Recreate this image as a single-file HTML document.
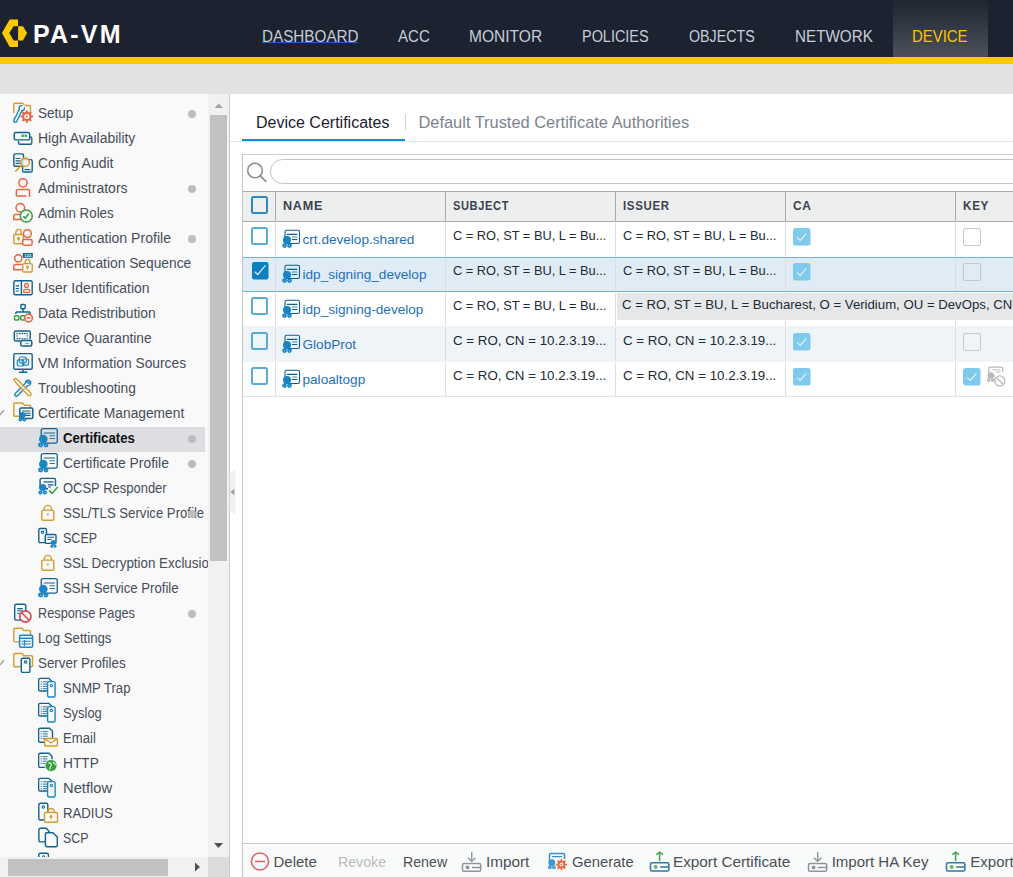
<!DOCTYPE html>
<html><head><meta charset="utf-8">
<style>
*{margin:0;padding:0;box-sizing:border-box}
html,body{width:1013px;height:877px;overflow:hidden;background:#fff;font-family:"Liberation Sans",sans-serif;position:relative}
.abs{position:absolute}
#hdr{position:absolute;left:0;top:0;width:1013px;height:57px;background:#1c2230}
#ylw{position:absolute;left:0;top:57px;width:1013px;height:7px;background:#fdc900}
#band{position:absolute;left:0;top:64px;width:1013px;height:30px;background:#e1e2e4}
.nav{position:absolute;top:27px;font-size:16px;line-height:19px;transform-origin:0 0;color:#c6cdd6;white-space:nowrap}
#devtab{position:absolute;left:893px;top:0;width:95px;height:57px;background:linear-gradient(#1f2531,#4b5059)}
#side{position:absolute;left:0;top:94px;width:229px;height:783px;background:#f9f9f9;overflow:hidden}
.st{position:absolute;font-size:14px;line-height:22px;color:#464d59;white-space:nowrap;transform-origin:0 0}
.st.sel{font-weight:bold;color:#111}
.ic{position:absolute}
.selrow{position:absolute;left:0;width:205px;height:25px;background:#dddee1}
.dot{position:absolute;left:188px;width:8px;height:8px;border-radius:50%;background:#bdbdbd}
#vsb{position:absolute;left:208px;top:94px;width:21px;height:763px;background:#f1f1f1}
#hsb{position:absolute;left:0;top:857px;width:208px;height:20px;background:#f1f1f1}
#corner{position:absolute;left:208px;top:857px;width:21px;height:20px;background:#dcdcdc}
#sideborder{position:absolute;left:229px;top:94px;width:1px;height:783px;background:#c6ccd1}
#main{position:absolute;left:230px;top:94px;width:783px;height:783px;background:#fff}

.tab1{position:absolute;left:256px;top:113.5px;font-size:16px;line-height:18px;color:#1c2230;white-space:nowrap}
.tab2{position:absolute;left:418.5px;top:112.5px;font-size:16.4px;line-height:18px;color:#7b8390;white-space:nowrap}
.hl{position:absolute;background:#c9c9c9}
.th{position:absolute;top:199px;font-size:12px;line-height:14px;font-weight:bold;color:#3a4350;letter-spacing:0.7px;white-space:nowrap;transform-origin:0 0}
.row{position:absolute;left:243px;width:770px;height:35px}
.cb{position:absolute;left:251px;width:17px;height:18px;border:2px solid #5aaad8;border-radius:2.5px;background:transparent}
.lnk{position:absolute;left:302.5px;font-size:13.6px;line-height:16px;color:#1f6fba;white-space:nowrap}
.cell{position:absolute;font-size:13px;line-height:16px;color:#222a33;white-space:nowrap;transform-origin:0 0}
.cbca{position:absolute;left:793px;width:17px;height:17px;border-radius:2px;background:#7ccbef}
.cbkey{position:absolute;left:963px;width:18px;height:18px;border:1.5px solid #c8c8c8;border-radius:2px;background:transparent}
.tb{position:absolute;top:852px;font-size:15px;line-height:19px;color:#4a4f57;white-space:nowrap;transform-origin:0 0}
</style></head><body>
<div id="hdr"></div>
<div id="devtab"></div>
<svg class="abs" style="left:0;top:0" width="30" height="57" viewBox="0 0 30 57"><path d="M9.74 19.4H18v6.8h-4.4L9.3 33.05l4.3 7.45H18v6.4H9.74L1.95 33.05Z" fill="#fdc900"/><path d="M18.1 26.2h4.85l4.1 6.85-4.1 7.45H18.1Z" fill="#fdc900"/></svg>
<div class="abs" style="left:33px;top:21.5px;font-size:25px;line-height:25px;font-weight:bold;color:#fff;letter-spacing:2.2px">PA-VM</div>
<div class="nav" style="left:261.8px;transform:scaleX(0.953);">DASHBOARD</div>
<div class="nav" style="left:397.5px;transform:scaleX(0.942);">ACC</div>
<div class="nav" style="left:469.2px;transform:scaleX(0.972);">MONITOR</div>
<div class="nav" style="left:582.2px;transform:scaleX(0.902);">POLICIES</div>
<div class="nav" style="left:688.7px;transform:scaleX(0.891);">OBJECTS</div>
<div class="nav" style="left:794.5px;transform:scaleX(0.952);">NETWORK</div>
<div class="nav" style="left:912.2px;transform:scaleX(0.933);color:#fcc400;">DEVICE</div>
<div class="abs" style="left:262px;top:42px;width:96px;height:1.3px;background:#1f62bd"></div>
<div id="ylw"></div>
<div id="band"></div>
<div id="side">
<div style="position:absolute;left:0;top:-94px;width:229px;height:877px">
<svg class="ic" style="left:13px;top:102px" width="22" height="22" viewBox="0 0 22 22"><path d="M0.8 11V2.3a1 1 0 0 1 1-1H9.8l1.6 2.2H16.5a1 1 0 0 1 1 1V11" fill="none" stroke="#d39c2c" stroke-width="1.4" stroke-linejoin="round"/><path d="M2.3 18.8L7.6 8.2" stroke="#1a87c4" stroke-width="4.4" stroke-linecap="round"/><circle cx="8.7" cy="6.2" r="3.3" fill="#1a87c4"/><path d="M2.3 18.8L7.6 8.2" stroke="#f9f9f9" stroke-width="1.6" stroke-linecap="round"/><circle cx="8.7" cy="6.2" r="1.9" fill="#f9f9f9"/><path d="M9.2 5.6L11.6 3.4" stroke="#f9f9f9" stroke-width="2.2"/><circle cx="13.8" cy="14.5" r="5.1" fill="#e9653f" stroke="#f9f9f9" stroke-width="0.8"/><rect x="12.9" y="8.2" width="1.8" height="2.4" fill="#e9653f" transform="rotate(0 13.8 14.5)"/><rect x="12.9" y="8.2" width="1.8" height="2.4" fill="#e9653f" transform="rotate(45 13.8 14.5)"/><rect x="12.9" y="8.2" width="1.8" height="2.4" fill="#e9653f" transform="rotate(90 13.8 14.5)"/><rect x="12.9" y="8.2" width="1.8" height="2.4" fill="#e9653f" transform="rotate(135 13.8 14.5)"/><rect x="12.9" y="8.2" width="1.8" height="2.4" fill="#e9653f" transform="rotate(180 13.8 14.5)"/><rect x="12.9" y="8.2" width="1.8" height="2.4" fill="#e9653f" transform="rotate(225 13.8 14.5)"/><rect x="12.9" y="8.2" width="1.8" height="2.4" fill="#e9653f" transform="rotate(270 13.8 14.5)"/><rect x="12.9" y="8.2" width="1.8" height="2.4" fill="#e9653f" transform="rotate(315 13.8 14.5)"/><circle cx="13.8" cy="14.5" r="2.6" fill="#f9f9f9"/><circle cx="13.8" cy="14.5" r="1.1" fill="#e9653f"/></svg>
<div class="st" style="left:38px;top:102px;transform:scaleX(0.965)">Setup</div>
<div class="dot" style="top:110px"></div>
<svg class="ic" style="left:13px;top:127px" width="22" height="22" viewBox="0 0 22 22"><path d="M5.6 13.9V15.9a1.3 1.3 0 0 0 1.3 1.3H17.5a1.3 1.3 0 0 0 1.3-1.3V11.2a1.3 1.3 0 0 0-1.3-1.3H17" fill="none" stroke="#10628f" stroke-width="1.4"/><rect x="1.3" y="5.5" width="15.4" height="7.4" rx="1.5" fill="#f9f9f9" stroke="#10628f" stroke-width="1.4"/><rect x="8.6" y="7.6" width="2.3" height="2.3" fill="#36a043"/><rect x="11.6" y="7.6" width="2.3" height="2.3" fill="#36a043"/></svg>
<div class="st" style="left:38px;top:127px;transform:scaleX(0.995)">High Availability</div>
<svg class="ic" style="left:13px;top:152px" width="22" height="22" viewBox="0 0 22 22"><rect x="0.9" y="1.9" width="9.6" height="12.4" rx="1.3" fill="#f9f9f9" stroke="#10628f" stroke-width="1.4"/><path d="M2.6 6.5H7.5M2.6 8.8H7.5M2.6 11.3H7.5" stroke="#10628f" stroke-width="1.2"/><rect x="9.6" y="7.6" width="9.6" height="12.4" rx="1.3" fill="#f9f9f9" stroke="#10628f" stroke-width="1.4"/><path d="M11.5 17.6H17.3" stroke="#10628f" stroke-width="1.2"/><path d="M8.5 13.4L2.6 19.2" stroke="#d39c2c" stroke-width="1.5" stroke-linecap="round"/><circle cx="12.1" cy="10.2" r="4.3" fill="#f9f9f9" fill-opacity="0.7" stroke="#d39c2c" stroke-width="1.5"/></svg>
<div class="st" style="left:38px;top:152px;transform:scaleX(1.0)">Config Audit</div>
<svg class="ic" style="left:13px;top:177px" width="22" height="22" viewBox="0 0 22 22"><circle cx="10" cy="5.8" r="4.1" fill="none" stroke="#e9653f" stroke-width="1.5"/><path d="M3.4 19.1V14a1.4 1.4 0 0 1 1.4-1.4H15.1a1.4 1.4 0 0 1 1.4 1.4V19.7M3.4 19.1H13.3" fill="none" stroke="#e9653f" stroke-width="1.5"/></svg>
<div class="st" style="left:38px;top:177px;transform:scaleX(1.001)">Administrators</div>
<div class="dot" style="top:185px"></div>
<svg class="ic" style="left:13px;top:202px" width="22" height="22" viewBox="0 0 22 22"><circle cx="7.3" cy="5.7" r="4.3" fill="none" stroke="#e9653f" stroke-width="1.5"/><path d="M8 12.6H2.2a1.4 1.4 0 0 0-1.4 1.4V17.6H8" fill="none" stroke="#e9653f" stroke-width="1.5"/><circle cx="13.3" cy="14" r="6" fill="#f9f9f9" stroke="#36a043" stroke-width="1.5"/><path d="M10.4 14.4L12.2 16.2L15.8 11.6" fill="none" stroke="#36a043" stroke-width="1.6"/></svg>
<div class="st" style="left:38px;top:202px;transform:scaleX(0.954)">Admin Roles</div>
<svg class="ic" style="left:13px;top:227px" width="22" height="22" viewBox="0 0 22 22"><path d="M2.9 7.5V5.1a2.7 2.7 0 0 1 5.4 0V7.5" fill="none" stroke="#d39c2c" stroke-width="1.4"/><rect x="0.8" y="7.5" width="9.5" height="9.2" rx="1.3" fill="#f9f9f9" stroke="#d39c2c" stroke-width="1.4"/><circle cx="5.550000000000001" cy="11.18" r="1.4" fill="#d39c2c"/><path d="M4.450000000000001 11.68L5.550000000000001 14.379999999999999L6.65 11.68Z" fill="#d39c2c"/><circle cx="14.4" cy="6.6" r="3.9" fill="none" stroke="#e9653f" stroke-width="1.5"/><rect x="9.7" y="12.6" width="9.4" height="5.6" rx="1.4" fill="#f9f9f9" stroke="#e9653f" stroke-width="1.5"/></svg>
<div class="st" style="left:38px;top:227px;transform:scaleX(1.005)">Authentication Profile</div>
<div class="dot" style="top:235px"></div>
<svg class="ic" style="left:13px;top:252px" width="22" height="22" viewBox="0 0 22 22"><circle cx="5.3" cy="6.3" r="3.6" fill="none" stroke="#e9653f" stroke-width="1.5"/><path d="M9 12.6H2.2a1.4 1.4 0 0 0-1.4 1.4V17.8H9" fill="none" stroke="#e9653f" stroke-width="1.5"/><rect x="9.8" y="1" width="10" height="4.8" fill="#10628f"/><text x="14.8" y="4.8" font-size="4.2" font-family="Liberation Sans" font-weight="bold" fill="#fff" text-anchor="middle">123</text><path d="M12.3 11.6V9.6a2.1999999999999993 2.1999999999999993 0 0 1 4.399999999999999 0V11.6" fill="none" stroke="#d39c2c" stroke-width="1.4"/><rect x="9.7" y="11.6" width="9.5" height="8.4" rx="1.3" fill="#f9f9f9" stroke="#d39c2c" stroke-width="1.4"/><circle cx="14.45" cy="14.96" r="1.4" fill="#d39c2c"/><path d="M13.35 15.46L14.45 18.16L15.549999999999999 15.46Z" fill="#d39c2c"/></svg>
<div class="st" style="left:38px;top:252px;transform:scaleX(0.984)">Authentication Sequence</div>
<svg class="ic" style="left:13px;top:277px" width="22" height="22" viewBox="0 0 22 22"><rect x="0.8" y="3.7" width="18.4" height="14" rx="1.5" fill="#f9f9f9" stroke="#10628f" stroke-width="1.4"/><path d="M8.4 3.7V17.7" stroke="#10628f" stroke-width="1.4"/><path d="M2.7 8.9H6M2.7 11.5H6M2.7 14H6" stroke="#10628f" stroke-width="1.2"/><circle cx="13.5" cy="8.4" r="1.9" fill="none" stroke="#e9653f" stroke-width="1.3"/><path d="M16.6 15.4H10.8V13.3a1 1 0 0 1 1-1H15.6a1 1 0 0 1 1 1V15" fill="none" stroke="#e9653f" stroke-width="1.3"/></svg>
<div class="st" style="left:38px;top:277px;transform:scaleX(0.996)">User Identification</div>
<svg class="ic" style="left:13px;top:302px" width="22" height="22" viewBox="0 0 22 22"><rect x="7.8" y="2.5" width="4.4" height="4.2" rx="1" fill="#f9f9f9" stroke="#10628f" stroke-width="1.4"/><path d="M10 6.7V10M2.9 11.9V10.6a.6.6 0 0 1 .6-.6H16.5a.6.6 0 0 1 .6.6V11.9" fill="none" stroke="#10628f" stroke-width="1.4"/><rect x="1.5" y="13.7" width="4.3" height="4.3" rx="1" fill="#f9f9f9" stroke="#36a043" stroke-width="1.5"/><rect x="7.7" y="13.7" width="4.3" height="4.3" rx="1" fill="#f9f9f9" stroke="#36a043" stroke-width="1.5"/><circle cx="15.5" cy="16" r="3.9" fill="#f9f9f9" stroke="#e9653f" stroke-width="1.6"/><path d="M13.6 16H17.4" stroke="#e9653f" stroke-width="1.6"/></svg>
<div class="st" style="left:38px;top:302px;transform:scaleX(0.989)">Data Redistribution</div>
<svg class="ic" style="left:13px;top:327px" width="22" height="22" viewBox="0 0 22 22"><path d="M7.3 14H2.6a1.3 1.3 0 0 1-1.3-1.3V5.3a1.3 1.3 0 0 1 1.3-1.3H15.9a1.3 1.3 0 0 1 1.3 1.3V12.4" fill="none" stroke="#10628f" stroke-width="1.4"/><circle cx="4.1" cy="6.6" r="0.8" fill="#10628f"/><circle cx="4.1" cy="11.8" r="0.8" fill="#10628f"/><circle cx="6.7" cy="6.6" r="0.8" fill="#10628f"/><circle cx="6.7" cy="11.8" r="0.8" fill="#10628f"/><circle cx="9.3" cy="6.6" r="0.8" fill="#10628f"/><circle cx="9.3" cy="11.8" r="0.8" fill="#10628f"/><circle cx="11.8" cy="6.6" r="0.8" fill="#10628f"/><circle cx="11.8" cy="11.8" r="0.8" fill="#10628f"/><circle cx="14.1" cy="6.6" r="0.8" fill="#10628f"/><circle cx="14.1" cy="11.8" r="0.8" fill="#10628f"/><circle cx="4.1" cy="8.9" r="0.7" fill="#10628f"/><circle cx="14.1" cy="8.9" r="0.7" fill="#10628f"/><path d="M5 6.6H13.3M5 11.8H13.3" stroke="#10628f" stroke-width="0.6" stroke-dasharray="0.9 0.8" opacity="0.6"/><rect x="7.8" y="13.5" width="11" height="5.6" rx="1.6" fill="#f9f9f9" stroke="#10628f" stroke-width="1.5"/><path d="M12.6 16.4H16.2" stroke="#10628f" stroke-width="1" stroke-dasharray="1 0.7"/></svg>
<div class="st" style="left:38px;top:327px;transform:scaleX(0.98)">Device Quarantine</div>
<svg class="ic" style="left:13px;top:352px" width="22" height="22" viewBox="0 0 22 22"><rect x="0.8" y="1.6" width="18.4" height="15.6" rx="1.3" fill="#f9f9f9" stroke="#10628f" stroke-width="1.4"/><path d="M10 17.2V20M6.1 20.2H14.3" stroke="#10628f" stroke-width="1.4"/><rect x="6.3" y="5" width="7" height="6" rx="1.4" fill="none" stroke="#1a87c4" stroke-width="1.2"/><rect x="4.2" y="7.8" width="6.6" height="6.2" rx="1.4" fill="none" stroke="#1a87c4" stroke-width="1.2"/><rect x="9.2" y="7" width="6.4" height="6.1" rx="1.4" fill="none" stroke="#1a87c4" stroke-width="1.2"/></svg>
<div class="st" style="left:38px;top:352px;transform:scaleX(0.986)">VM Information Sources</div>
<svg class="ic" style="left:13px;top:377px" width="22" height="22" viewBox="0 0 22 22"><path d="M16.5 3.5 C14.5 2.5 12 3.8 12.4 6.3 L2.2 16.4 a1.6 1.6 0 0 0 2.3 2.3 L14.6 8.6 C17 9 18.4 6.6 17.5 4.4 L15.8 6.2 L14.3 5.7 L13.8 4.2Z" fill="#f9f9f9" stroke="#1a87c4" stroke-width="1.4" stroke-linejoin="round"/><path d="M1 2.2 L2.6 1.4 L6.5 4.8 L17.6 15.8 a1.7 1.7 0 0 1-2.4 2.4 L4.3 7.2 L1.2 3.4Z" fill="#f9f9f9" fill-opacity="0.6" stroke="#d39c2c" stroke-width="1.4" stroke-linejoin="round"/></svg>
<div class="st" style="left:38px;top:377px;transform:scaleX(0.98)">Troubleshooting</div>
<svg class="ic" style="left:13px;top:402px" width="22" height="22" viewBox="0 0 22 22"><path d="M0.8 13.2V2.0a1 1 0 0 1 1-1H9.5l1.6 2.2H16.5a1 1 0 0 1 1 1V13.2a1 1 0 0 1-1 1H1.8a1 1 0 0 1-1-1Z" fill="none" stroke="#d39c2c" stroke-width="1.4" stroke-linejoin="round"/><rect x="6.8" y="6.1" width="13" height="10.4" rx="1.3" fill="#f9f9f9" stroke="#10628f" stroke-width="1.5"/><path d="M9 9H17.5M12 11.2H17.5M12 13.4H17.5" stroke="#10628f" stroke-width="1.1"/><circle cx="7.32" cy="17.58" r="1.86" fill="#1a87c4"/><circle cx="7.32" cy="17.74" r="0.54" fill="#fff" opacity="0.45"/><circle cx="11.28" cy="17.58" r="1.86" fill="#1a87c4"/><circle cx="11.28" cy="17.74" r="0.54" fill="#fff" opacity="0.45"/><circle cx="9.3" cy="13.1" r="3.2" fill="#1a87c4"/></svg>
<div class="st" style="left:38px;top:402px;transform:scaleX(0.984)">Certificate Management</div>
<svg class="abs" style="left:0;top:402px" width="8" height="25" viewBox="0 0 8 25"><path d="M-3 9.5L0 12.8L3.9 8.3" fill="none" stroke="#9a9ea3" stroke-width="1.3"/></svg>
<div class="selrow" style="top:427px"></div>
<svg class="ic" style="left:38px;top:427px" width="22" height="22" viewBox="0 0 22 22"><rect x="3.25" y="1.55" width="16" height="14.5" rx="1.8" fill="none" stroke="#10628f" stroke-width="1.3"/><path d="M6.3 6H16.5" stroke="#10628f" stroke-width="1.2" stroke-linecap="round"/><path d="M11.9 8.8H16.5M11.9 11.5H16.5" stroke="#10628f" stroke-width="1.1" stroke-linecap="round" opacity="0.85"/><circle cx="2.63" cy="18.02" r="2.49" fill="#1a87c4"/><circle cx="2.63" cy="18.23" r="0.73" fill="#fff" opacity="0.45"/><circle cx="7.97" cy="18.02" r="2.49" fill="#1a87c4"/><circle cx="7.97" cy="18.23" r="0.73" fill="#fff" opacity="0.45"/><circle cx="5.3" cy="12" r="4.3" fill="#1a87c4"/></svg>
<div class="st sel" style="left:63px;top:427px;transform:scaleX(0.942)">Certificates</div>
<div class="dot" style="top:435px"></div>
<svg class="ic" style="left:38px;top:452px" width="22" height="22" viewBox="0 0 22 22"><rect x="3.25" y="1.55" width="16" height="14.5" rx="1.8" fill="none" stroke="#10628f" stroke-width="1.3"/><path d="M6.3 6H16.5" stroke="#10628f" stroke-width="1.2" stroke-linecap="round"/><path d="M11.9 8.8H16.5M11.9 11.5H16.5" stroke="#10628f" stroke-width="1.1" stroke-linecap="round" opacity="0.85"/><circle cx="2.63" cy="18.02" r="2.49" fill="#1a87c4"/><circle cx="2.63" cy="18.23" r="0.73" fill="#fff" opacity="0.45"/><circle cx="7.97" cy="18.02" r="2.49" fill="#1a87c4"/><circle cx="7.97" cy="18.23" r="0.73" fill="#fff" opacity="0.45"/><circle cx="5.3" cy="12" r="4.3" fill="#1a87c4"/></svg>
<div class="st" style="left:63px;top:452px;transform:scaleX(0.994)">Certificate Profile</div>
<div class="dot" style="top:460px"></div>
<svg class="ic" style="left:38px;top:477px" width="22" height="22" viewBox="0 0 22 22"><path d="M10 11.7H3.6a1.5 1.5 0 0 1-1.5-1.5V2.9a1.5 1.5 0 0 1 1.5-1.5H16a1.5 1.5 0 0 1 1.5 1.5V9" fill="none" stroke="#10628f" stroke-width="1.4"/><path d="M5.5 4.8H15.5M9.8 7.8H15.5M9.8 10H13" stroke="#10628f" stroke-width="1.2"/><circle cx="2.47" cy="15.54" r="2.09" fill="#1a87c4"/><circle cx="2.47" cy="15.72" r="0.61" fill="#fff" opacity="0.45"/><circle cx="6.93" cy="15.54" r="2.09" fill="#1a87c4"/><circle cx="6.93" cy="15.72" r="0.61" fill="#fff" opacity="0.45"/><circle cx="4.7" cy="10.5" r="3.6" fill="#1a87c4"/><path d="M11.1 13.4L14.1 16.4L19.7 10" fill="none" stroke="#36a043" stroke-width="1.5"/></svg>
<div class="st" style="left:63px;top:477px;transform:scaleX(0.927)">OCSP Responder</div>
<svg class="ic" style="left:38px;top:502px" width="22" height="22" viewBox="0 0 22 22"><path d="M6.2 8.1V7.05a3.65 3.65 0 0 1 7.3 0V8.1" fill="none" stroke="#d39c2c" stroke-width="1.4"/><rect x="3.8" y="8.1" width="12.0" height="10.200000000000001" rx="1.3" fill="#f9f9f9" stroke="#d39c2c" stroke-width="1.4"/><circle cx="9.8" cy="12.38" r="1" fill="#d39c2c"/></svg>
<div class="st" style="left:63px;top:502px;transform:scaleX(0.94)">SSL/TLS Service Profile</div>
<div class="dot" style="top:510px"></div>
<svg class="ic" style="left:38px;top:527px" width="22" height="22" viewBox="0 0 22 22"><rect x="0.8" y="1.5" width="7.7" height="14.1" rx="1.3" fill="#f9f9f9" stroke="#10628f" stroke-width="1.4"/><circle cx="4.5" cy="5.3" r="1.2" fill="none" stroke="#10628f" stroke-width="1.1"/><rect x="7.3" y="7.5" width="10.7" height="8.9" rx="1.2" fill="#f9f9f9" stroke="#10628f" stroke-width="1.4"/><path d="M9.3 10.3H16M9.3 12.5H13.5" stroke="#10628f" stroke-width="1.1"/><circle cx="13.79" cy="19.24" r="1.51" fill="#1a87c4"/><circle cx="13.79" cy="19.37" r="0.44" fill="#fff" opacity="0.45"/><circle cx="17.01" cy="19.24" r="1.51" fill="#1a87c4"/><circle cx="17.01" cy="19.37" r="0.44" fill="#fff" opacity="0.45"/><circle cx="15.4" cy="15.6" r="2.6" fill="#1a87c4"/></svg>
<div class="st" style="left:63px;top:527px;transform:scaleX(0.894)">SCEP</div>
<svg class="ic" style="left:38px;top:552px" width="22" height="22" viewBox="0 0 22 22"><path d="M6.2 8.1V7.05a3.65 3.65 0 0 1 7.3 0V8.1" fill="none" stroke="#d39c2c" stroke-width="1.4"/><rect x="3.8" y="8.1" width="12.0" height="10.200000000000001" rx="1.3" fill="#f9f9f9" stroke="#d39c2c" stroke-width="1.4"/><circle cx="9.8" cy="12.38" r="1" fill="#d39c2c"/></svg>
<div class="st" style="left:63px;top:552px;transform:scaleX(0.955)">SSL Decryption Exclusion</div>
<svg class="ic" style="left:38px;top:577px" width="22" height="22" viewBox="0 0 22 22"><rect x="3.25" y="1.55" width="16" height="14.5" rx="1.8" fill="none" stroke="#10628f" stroke-width="1.3"/><path d="M6.3 6H16.5" stroke="#10628f" stroke-width="1.2" stroke-linecap="round"/><path d="M11.9 8.8H16.5M11.9 11.5H16.5" stroke="#10628f" stroke-width="1.1" stroke-linecap="round" opacity="0.85"/><circle cx="2.63" cy="18.02" r="2.49" fill="#1a87c4"/><circle cx="2.63" cy="18.23" r="0.73" fill="#fff" opacity="0.45"/><circle cx="7.97" cy="18.02" r="2.49" fill="#1a87c4"/><circle cx="7.97" cy="18.23" r="0.73" fill="#fff" opacity="0.45"/><circle cx="5.3" cy="12" r="4.3" fill="#1a87c4"/></svg>
<div class="st" style="left:63px;top:577px;transform:scaleX(0.94)">SSH Service Profile</div>
<svg class="ic" style="left:13px;top:602px" width="22" height="22" viewBox="0 0 22 22"><rect x="1.7" y="2.3" width="11.1" height="15.8" rx="1.6" fill="#f9f9f9" stroke="#10628f" stroke-width="1.4"/><path d="M4.2 6.6H9.8M4.2 8.8H9.8M4.2 11.2H8" stroke="#10628f" stroke-width="1.1"/><circle cx="12.4" cy="14.5" r="5.6" fill="#f9f9f9" stroke="#d2474f" stroke-width="1.6"/><path d="M8.4 10.5L16.4 18.5" stroke="#d2474f" stroke-width="1.6"/></svg>
<div class="st" style="left:38px;top:602px;transform:scaleX(0.909)">Response Pages</div>
<div class="dot" style="top:610px"></div>
<svg class="ic" style="left:13px;top:627px" width="22" height="22" viewBox="0 0 22 22"><path d="M0.8 13.9V2.3a1 1 0 0 1 1-1H9l1.6 2.2H16.5a1 1 0 0 1 1 1V13.9a1 1 0 0 1-1 1H1.8a1 1 0 0 1-1-1Z" fill="none" stroke="#d39c2c" stroke-width="1.4" stroke-linejoin="round"/><rect x="6.6" y="8.3" width="13" height="12" rx="1.4" fill="#f9f9f9" stroke="#1a87c4" stroke-width="1.5"/><path d="M6.6 11.3H19.6" stroke="#1a87c4" stroke-width="1.5"/><path d="M8.5 14.3H17.8M8.5 17H17.8M11.5 13V19" stroke="#1a87c4" stroke-width="1.1"/></svg>
<div class="st" style="left:38px;top:627px;transform:scaleX(0.944)">Log Settings</div>
<svg class="ic" style="left:13px;top:652px" width="22" height="22" viewBox="0 0 22 22"><path d="M0.8 13.7V2.5a1 1 0 0 1 1-1H9l1.6 2.2H18.5a1 1 0 0 1 1 1V13.7a1 1 0 0 1-1 1H1.8a1 1 0 0 1-1-1Z" fill="none" stroke="#d39c2c" stroke-width="1.4" stroke-linejoin="round"/><rect x="8.3" y="6.3" width="8.599999999999998" height="14.099999999999998" rx="1.5" fill="#f9f9f9" stroke="#10628f" stroke-width="1.4"/><circle cx="12.6" cy="10.1" r="1.2" fill="none" stroke="#10628f" stroke-width="1.1"/></svg>
<div class="st" style="left:38px;top:652px;transform:scaleX(0.954)">Server Profiles</div>
<svg class="abs" style="left:0;top:652px" width="8" height="25" viewBox="0 0 8 25"><path d="M-3 9.5L0 12.8L3.9 8.3" fill="none" stroke="#9a9ea3" stroke-width="1.3"/></svg>
<svg class="ic" style="left:38px;top:677px" width="22" height="22" viewBox="0 0 22 22"><path d="M0.6 2.9a1.5 1.5 0 0 1 1.5-1.5H11L14 4.4V12.5a1.5 1.5 0 0 1-1.5 1.5H2.1a1.5 1.5 0 0 1-1.5-1.5Z" fill="#f9f9f9" stroke="#10628f" stroke-width="1.4" stroke-linejoin="round"/><path d="M2.7 4.80H3.8000000000000003M4.8 4.80H9.44" stroke="#10628f" stroke-width="0.95" opacity="0.9"/><path d="M2.7 7.10H3.8000000000000003M4.8 7.10H9.44" stroke="#10628f" stroke-width="0.95" opacity="0.9"/><path d="M2.7 9.40H3.8000000000000003M4.8 9.40H9.44" stroke="#10628f" stroke-width="0.95" opacity="0.9"/><path d="M2.7 11.70H3.8000000000000003M4.8 11.70H9.44" stroke="#10628f" stroke-width="0.95" opacity="0.9"/><rect x="9.6" y="4.6" width="7.500000000000002" height="15.4" rx="1.5" fill="#f9f9f9" stroke="#1a87c4" stroke-width="1.4"/><circle cx="13.350000000000001" cy="8.399999999999999" r="1.2" fill="none" stroke="#1a87c4" stroke-width="1.1"/></svg>
<div class="st" style="left:63px;top:677px;transform:scaleX(0.935)">SNMP Trap</div>
<svg class="ic" style="left:38px;top:702px" width="22" height="22" viewBox="0 0 22 22"><path d="M0.6 2.9a1.5 1.5 0 0 1 1.5-1.5H11L14 4.4V12.5a1.5 1.5 0 0 1-1.5 1.5H2.1a1.5 1.5 0 0 1-1.5-1.5Z" fill="#f9f9f9" stroke="#10628f" stroke-width="1.4" stroke-linejoin="round"/><path d="M2.7 4.80H3.8000000000000003M4.8 4.80H9.44" stroke="#10628f" stroke-width="0.95" opacity="0.9"/><path d="M2.7 7.10H3.8000000000000003M4.8 7.10H9.44" stroke="#10628f" stroke-width="0.95" opacity="0.9"/><path d="M2.7 9.40H3.8000000000000003M4.8 9.40H9.44" stroke="#10628f" stroke-width="0.95" opacity="0.9"/><path d="M2.7 11.70H3.8000000000000003M4.8 11.70H9.44" stroke="#10628f" stroke-width="0.95" opacity="0.9"/><rect x="9.6" y="4.6" width="7.500000000000002" height="15.4" rx="1.5" fill="#f9f9f9" stroke="#1a87c4" stroke-width="1.4"/><circle cx="13.350000000000001" cy="8.399999999999999" r="1.2" fill="none" stroke="#1a87c4" stroke-width="1.1"/></svg>
<div class="st" style="left:63px;top:702px;transform:scaleX(0.923)">Syslog</div>
<svg class="ic" style="left:38px;top:727px" width="22" height="22" viewBox="0 0 22 22"><path d="M0.6 2.7a1.5 1.5 0 0 1 1.5-1.5H11.5L14.5 4.2V13.8a1.5 1.5 0 0 1-1.5 1.5H2.1a1.5 1.5 0 0 1-1.5-1.5Z" fill="#f9f9f9" stroke="#10628f" stroke-width="1.4" stroke-linejoin="round"/><path d="M2.7 4.60H3.8000000000000003M4.8 4.60H9.77" stroke="#10628f" stroke-width="0.95" opacity="0.9"/><path d="M2.7 6.90H3.8000000000000003M4.8 6.90H9.77" stroke="#10628f" stroke-width="0.95" opacity="0.9"/><path d="M2.7 9.20H3.8000000000000003M4.8 9.20H9.77" stroke="#10628f" stroke-width="0.95" opacity="0.9"/><path d="M2.7 11.50H3.8000000000000003M4.8 11.50H9.77" stroke="#10628f" stroke-width="0.95" opacity="0.9"/><rect x="6.6" y="11.6" width="12.8" height="7.4" rx="1" fill="#f9f9f9" stroke="#d39c2c" stroke-width="1.5"/><path d="M7 12L13 16L19 12" fill="none" stroke="#d39c2c" stroke-width="1.3"/></svg>
<div class="st" style="left:63px;top:727px;transform:scaleX(0.937)">Email</div>
<svg class="ic" style="left:38px;top:752px" width="22" height="22" viewBox="0 0 22 22"><path d="M0.6 2.7a1.5 1.5 0 0 1 1.5-1.5H11L14 4.2V13.9a1.5 1.5 0 0 1-1.5 1.5H2.1a1.5 1.5 0 0 1-1.5-1.5Z" fill="#f9f9f9" stroke="#10628f" stroke-width="1.4" stroke-linejoin="round"/><path d="M2.7 4.60H3.8000000000000003M4.8 4.60H9.44" stroke="#10628f" stroke-width="0.95" opacity="0.9"/><path d="M2.7 6.90H3.8000000000000003M4.8 6.90H9.44" stroke="#10628f" stroke-width="0.95" opacity="0.9"/><path d="M2.7 9.20H3.8000000000000003M4.8 9.20H9.44" stroke="#10628f" stroke-width="0.95" opacity="0.9"/><path d="M2.7 11.50H3.8000000000000003M4.8 11.50H9.44" stroke="#10628f" stroke-width="0.95" opacity="0.9"/><circle cx="13" cy="13.5" r="6" fill="#36a043" stroke="#f9f9f9" stroke-width="0.8"/><path d="M10.5 10.5C12 11.5 13.5 11 13.5 12.5C13.5 14 11.5 14.5 12 17.5M15 10C16 11.5 17.5 12 17.8 13.2" fill="none" stroke="#f9f9f9" stroke-width="1.1"/></svg>
<div class="st" style="left:63px;top:752px;transform:scaleX(0.979)">HTTP</div>
<svg class="ic" style="left:38px;top:777px" width="22" height="22" viewBox="0 0 22 22"><path d="M0.6 2.9a1.5 1.5 0 0 1 1.5-1.5H11L14 4.4V12.5a1.5 1.5 0 0 1-1.5 1.5H2.1a1.5 1.5 0 0 1-1.5-1.5Z" fill="#f9f9f9" stroke="#10628f" stroke-width="1.4" stroke-linejoin="round"/><path d="M2.7 4.80H3.8000000000000003M4.8 4.80H9.44" stroke="#10628f" stroke-width="0.95" opacity="0.9"/><path d="M2.7 7.10H3.8000000000000003M4.8 7.10H9.44" stroke="#10628f" stroke-width="0.95" opacity="0.9"/><path d="M2.7 9.40H3.8000000000000003M4.8 9.40H9.44" stroke="#10628f" stroke-width="0.95" opacity="0.9"/><path d="M2.7 11.70H3.8000000000000003M4.8 11.70H9.44" stroke="#10628f" stroke-width="0.95" opacity="0.9"/><rect x="9.6" y="4.6" width="7.500000000000002" height="15.4" rx="1.5" fill="#f9f9f9" stroke="#1a87c4" stroke-width="1.4"/><circle cx="13.350000000000001" cy="8.399999999999999" r="1.2" fill="none" stroke="#1a87c4" stroke-width="1.1"/></svg>
<div class="st" style="left:63px;top:777px;transform:scaleX(1.052)">Netflow</div>
<svg class="ic" style="left:38px;top:802px" width="22" height="22" viewBox="0 0 22 22"><rect x="0.8" y="1.2" width="9.0" height="16.8" rx="1.5" fill="#f9f9f9" stroke="#10628f" stroke-width="1.4"/><circle cx="5.300000000000001" cy="5.0" r="1.2" fill="none" stroke="#10628f" stroke-width="1.1"/><path d="M9.8 10.5V9.7a3.1999999999999993 3.1999999999999993 0 0 1 6.399999999999999 0V10.5" fill="none" stroke="#d39c2c" stroke-width="1.4"/><rect x="6.5" y="10.5" width="13.0" height="9.7" rx="1.3" fill="#f9f9f9" stroke="#d39c2c" stroke-width="1.4"/><circle cx="13.0" cy="14.38" r="1.4" fill="#d39c2c"/><path d="M11.9 14.879999999999999L13.0 17.58L14.1 14.879999999999999Z" fill="#d39c2c"/></svg>
<div class="st" style="left:63px;top:802px;transform:scaleX(0.943)">RADIUS</div>
<svg class="ic" style="left:38px;top:827px" width="22" height="22" viewBox="0 0 22 22"><path d="M0.9 2.8a1.5 1.5 0 0 1 1.5-1.5H8l3.3 3.3V13.4a1.5 1.5 0 0 1-1.5 1.5H2.4a1.5 1.5 0 0 1-1.5-1.5Z" fill="#f9f9f9" stroke="#10628f" stroke-width="1.4"/><path d="M7.4 7.2a1.5 1.5 0 0 1 1.5-1.5H15l4.3 4.3V18.3a1.5 1.5 0 0 1-1.5 1.5H8.9a1.5 1.5 0 0 1-1.5-1.5Z" fill="#f9f9f9" stroke="#10628f" stroke-width="1.4"/></svg>
<div class="st" style="left:63px;top:827px;transform:scaleX(0.886)">SCP</div>
<svg class="ic" style="left:38px;top:852px" width="22" height="22" viewBox="0 0 22 22"><rect x="0.8" y="1.2" width="9.6" height="16.8" rx="1.5" fill="#f9f9f9" stroke="#10628f" stroke-width="1.4"/><circle cx="5.6000000000000005" cy="5.0" r="1.2" fill="none" stroke="#10628f" stroke-width="1.1"/></svg>
</div>
</div>
<div id="vsb"></div>
<div id="hsb"></div>
<div id="corner"></div>
<div id="sideborder"></div>
<div id="main"></div>
<!-- scrollbar parts -->
<svg class="abs" style="left:208px;top:94px" width="21" height="20" viewBox="0 0 21 20"><path d="M6.5 14H15L10.75 9.5Z" fill="#a3a3a3"/></svg>
<div class="abs" style="left:210px;top:115px;width:17px;height:446px;background:#c1c1c1"></div>
<svg class="abs" style="left:208px;top:837px" width="21" height="20" viewBox="0 0 21 20"><path d="M6 6H15L10.5 11Z" fill="#505050"/></svg>
<div class="abs" style="left:8px;top:859px;width:160px;height:17px;background:#c1c1c1"></div>
<svg class="abs" style="left:188px;top:857px" width="20" height="20" viewBox="0 0 20 20"><path d="M7 5.5V14.5L12 10Z" fill="#505050"/></svg>
<!-- collapse handle -->
<svg class="abs" style="left:229px;top:465px" width="10" height="55" viewBox="0 0 10 55"><path d="M1 9.3L6 5.2V49L1 45Z" fill="#f2f2f2" stroke="#e6e6e6" stroke-width="0.6"/><path d="M1.3 27.1L5.3 24V30.2Z" fill="#9c9c9c"/></svg>

<div class="tab1">Device Certificates</div>
<div class="abs" style="left:405px;top:114px;width:1px;height:16px;background:#cfd3d8"></div>
<div class="tab2">Default Trusted Certificate Authorities</div>
<div class="abs" style="left:230px;top:141px;width:783px;height:1px;background:#dfe1e4"></div>
<div class="abs" style="left:242px;top:139px;width:163px;height:2px;background:#0f8ddf"></div>
<!-- table box -->
<div class="abs" style="left:242px;top:154px;width:771px;height:1px;background:#cfcfcf"></div>
<div class="abs" style="left:242px;top:154px;width:1px;height:723px;background:#c4c4c4"></div>
<svg class="abs" style="left:245px;top:160px" width="26" height="26" viewBox="0 0 26 26"><circle cx="10" cy="10.5" r="7.3" fill="none" stroke="#8a8f96" stroke-width="1.6"/><path d="M15.3 15.8 21.3 21.8" stroke="#8a8f96" stroke-width="1.8"/></svg>
<div class="abs" style="left:270px;top:159px;width:800px;height:25px;border:1px solid #c5c5c5;border-radius:12.5px;background:#fff"></div>
<!-- header -->
<div class="abs" style="left:243px;top:191px;width:770px;height:31px;background:#edeeee;border-top:1px solid #a8aaad;border-bottom:1px solid #a8aaad"></div>
<div class="cb" style="top:196px;border-color:#2b8ac2"></div>
<div class="abs" style="left:275px;top:192px;width:1px;height:29px;background:#a8aaad"></div><div class="abs" style="left:445px;top:192px;width:1px;height:29px;background:#a8aaad"></div><div class="abs" style="left:615px;top:192px;width:1px;height:29px;background:#a8aaad"></div><div class="abs" style="left:785px;top:192px;width:1px;height:29px;background:#a8aaad"></div><div class="abs" style="left:955px;top:192px;width:1px;height:29px;background:#a8aaad"></div>
<div class="th" style="left:283px;transform:scaleX(1.05)">NAME</div>
<div class="th" style="left:453px;transform:scaleX(0.92)">SUBJECT</div>
<div class="th" style="left:623px;transform:scaleX(0.955)">ISSUER</div>
<div class="th" style="left:793px;transform:scaleX(0.99)">CA</div>
<div class="th" style="left:963px;transform:scaleX(0.975)">KEY</div>
<div class="abs" style="left:243px;top:222px;width:770px;height:35px;background:#fff"></div>
<div class="abs" style="left:275px;top:223px;width:1px;height:33px;background:#dcdddf"></div>
<div class="abs" style="left:445px;top:223px;width:1px;height:33px;background:#dcdddf"></div>
<div class="abs" style="left:615px;top:223px;width:1px;height:33px;background:#dcdddf"></div>
<div class="abs" style="left:785px;top:223px;width:1px;height:33px;background:#dcdddf"></div>
<div class="abs" style="left:955px;top:223px;width:1px;height:33px;background:#dcdddf"></div>
<div class="cb" style="top:227px"></div>
<svg class="abs" style="left:280px;top:226px" width="24" height="24" viewBox="0 0 24 24"><rect x="5" y="4.3" width="14.5" height="13.2" rx="1.6" fill="none" stroke="#0a5f8e" stroke-width="1.1"/><path d="M7.3 8.35H16.9" stroke="#0a5f8e" stroke-width="1.1" stroke-linecap="round"/><path d="M12.4 10.95H16.9" stroke="#3b86b0" stroke-width="1.1" stroke-linecap="round"/><path d="M12.4 13.5H16.9" stroke="#0a5f8e" stroke-width="1.1" stroke-linecap="round"/><circle cx="4.52" cy="19.60" r="2.32" fill="#1684c2"/><circle cx="4.52" cy="19.80" r="0.68" fill="#fff" opacity="0.45"/><circle cx="9.48" cy="19.60" r="2.32" fill="#1684c2"/><circle cx="9.48" cy="19.80" r="0.68" fill="#fff" opacity="0.45"/><circle cx="7" cy="14" r="4" fill="#1684c2"/></svg>
<div class="lnk" style="top:231.8px">crt.develop.shared</div>
<div class="cell" style="left:453px;top:228px;transform:scaleX(0.985)">C = RO, ST = BU, L = Bu...</div>
<div class="cell" style="left:623px;top:228px;transform:scaleX(0.985)">C = RO, ST = BU, L = Bu...</div>
<svg class="abs" style="left:793.4px;top:228.4px" width="18" height="18" viewBox="0 0 18 18"><rect x="0" y="0" width="17.5" height="17.5" rx="2.5" fill="#7fcbee"/><path d="M4.2 9.6l3 2.8 6.2-7" fill="none" stroke="#e4f4fb" stroke-width="1.1"/></svg>
<div class="cbkey" style="top:228px"></div>
<div class="abs" style="left:243px;top:257px;width:770px;height:35px;background:#dfecf5"></div>
<div class="abs" style="left:275px;top:258px;width:1px;height:33px;background:#dcdddf"></div>
<div class="abs" style="left:445px;top:258px;width:1px;height:33px;background:#dcdddf"></div>
<div class="abs" style="left:615px;top:258px;width:1px;height:33px;background:#dcdddf"></div>
<div class="abs" style="left:785px;top:258px;width:1px;height:33px;background:#dcdddf"></div>
<div class="abs" style="left:955px;top:258px;width:1px;height:33px;background:#dcdddf"></div>
<div class="abs" style="left:243px;top:257px;width:770px;height:1px;background:#6db3dc"></div>
<div class="abs" style="left:243px;top:291px;width:770px;height:1px;background:#6db3dc"></div>
<svg class="abs" style="left:251.5px;top:262.2px" width="17" height="18" viewBox="0 0 17 18"><rect x="0" y="0" width="16.5" height="17.5" rx="2.2" fill="#0b80bd"/><path d="M2.8 9.7L5.8 12.5L13.5 3.3" fill="none" stroke="#cde7f4" stroke-width="1.3"/></svg>
<svg class="abs" style="left:280px;top:261px" width="24" height="24" viewBox="0 0 24 24"><rect x="5" y="4.3" width="14.5" height="13.2" rx="1.6" fill="none" stroke="#0a5f8e" stroke-width="1.1"/><path d="M7.3 8.35H16.9" stroke="#0a5f8e" stroke-width="1.1" stroke-linecap="round"/><path d="M12.4 10.95H16.9" stroke="#3b86b0" stroke-width="1.1" stroke-linecap="round"/><path d="M12.4 13.5H16.9" stroke="#0a5f8e" stroke-width="1.1" stroke-linecap="round"/><circle cx="4.52" cy="19.60" r="2.32" fill="#1684c2"/><circle cx="4.52" cy="19.80" r="0.68" fill="#fff" opacity="0.45"/><circle cx="9.48" cy="19.60" r="2.32" fill="#1684c2"/><circle cx="9.48" cy="19.80" r="0.68" fill="#fff" opacity="0.45"/><circle cx="7" cy="14" r="4" fill="#1684c2"/></svg>
<div class="lnk" style="top:266.8px">idp_signing_develop</div>
<div class="cell" style="left:453px;top:263px;transform:scaleX(0.985)">C = RO, ST = BU, L = Bu...</div>
<div class="cell" style="left:623px;top:263px;transform:scaleX(0.985)">C = RO, ST = BU, L = Bu...</div>
<svg class="abs" style="left:793.4px;top:263.4px" width="18" height="18" viewBox="0 0 18 18"><rect x="0" y="0" width="17.5" height="17.5" rx="2.5" fill="#7fcbee"/><path d="M4.2 9.6l3 2.8 6.2-7" fill="none" stroke="#e4f4fb" stroke-width="1.1"/></svg>
<div class="cbkey" style="top:263px"></div>
<div class="abs" style="left:243px;top:292px;width:770px;height:35px;background:#fff"></div>
<div class="abs" style="left:275px;top:293px;width:1px;height:33px;background:#dcdddf"></div>
<div class="abs" style="left:445px;top:293px;width:1px;height:33px;background:#dcdddf"></div>
<div class="abs" style="left:615px;top:293px;width:1px;height:33px;background:#dcdddf"></div>
<div class="abs" style="left:785px;top:293px;width:1px;height:33px;background:#dcdddf"></div>
<div class="abs" style="left:955px;top:293px;width:1px;height:33px;background:#dcdddf"></div>
<div class="cb" style="top:297px"></div>
<svg class="abs" style="left:280px;top:296px" width="24" height="24" viewBox="0 0 24 24"><rect x="5" y="4.3" width="14.5" height="13.2" rx="1.6" fill="none" stroke="#0a5f8e" stroke-width="1.1"/><path d="M7.3 8.35H16.9" stroke="#0a5f8e" stroke-width="1.1" stroke-linecap="round"/><path d="M12.4 10.95H16.9" stroke="#3b86b0" stroke-width="1.1" stroke-linecap="round"/><path d="M12.4 13.5H16.9" stroke="#0a5f8e" stroke-width="1.1" stroke-linecap="round"/><circle cx="4.52" cy="19.60" r="2.32" fill="#1684c2"/><circle cx="4.52" cy="19.80" r="0.68" fill="#fff" opacity="0.45"/><circle cx="9.48" cy="19.60" r="2.32" fill="#1684c2"/><circle cx="9.48" cy="19.80" r="0.68" fill="#fff" opacity="0.45"/><circle cx="7" cy="14" r="4" fill="#1684c2"/></svg>
<div class="lnk" style="top:301.8px">idp_signing-develop</div>
<div class="cell" style="left:453px;top:298px;transform:scaleX(0.985)">C = RO, ST = BU, L = Bu...</div>
<div class="abs" style="left:617px;top:293px;width:400px;height:27px;background:#e6e7e8"></div>
<div class="cell" style="left:622px;top:297px;font-size:13.2px">C = RO, ST = BU, L = Bucharest, O = Veridium, OU = DevOps, CN = idp</div>
<div class="abs" style="left:243px;top:326px;width:770px;height:36px;background:#eef4f7"></div>
<div class="abs" style="left:275px;top:328px;width:1px;height:33px;background:#dcdddf"></div>
<div class="abs" style="left:445px;top:328px;width:1px;height:33px;background:#dcdddf"></div>
<div class="abs" style="left:615px;top:328px;width:1px;height:33px;background:#dcdddf"></div>
<div class="abs" style="left:785px;top:328px;width:1px;height:33px;background:#dcdddf"></div>
<div class="abs" style="left:955px;top:328px;width:1px;height:33px;background:#dcdddf"></div>
<div class="cb" style="top:332px"></div>
<svg class="abs" style="left:280px;top:331px" width="24" height="24" viewBox="0 0 24 24"><rect x="5" y="4.3" width="14.5" height="13.2" rx="1.6" fill="none" stroke="#0a5f8e" stroke-width="1.1"/><path d="M7.3 8.35H16.9" stroke="#0a5f8e" stroke-width="1.1" stroke-linecap="round"/><path d="M12.4 10.95H16.9" stroke="#3b86b0" stroke-width="1.1" stroke-linecap="round"/><path d="M12.4 13.5H16.9" stroke="#0a5f8e" stroke-width="1.1" stroke-linecap="round"/><circle cx="4.52" cy="19.60" r="2.32" fill="#1684c2"/><circle cx="4.52" cy="19.80" r="0.68" fill="#fff" opacity="0.45"/><circle cx="9.48" cy="19.60" r="2.32" fill="#1684c2"/><circle cx="9.48" cy="19.80" r="0.68" fill="#fff" opacity="0.45"/><circle cx="7" cy="14" r="4" fill="#1684c2"/></svg>
<div class="lnk" style="top:336.8px">GlobProt</div>
<div class="cell" style="left:453px;top:333px;transform:scaleX(1.025)">C = RO, CN = 10.2.3.19...</div>
<div class="cell" style="left:623px;top:333px;transform:scaleX(1.025)">C = RO, CN = 10.2.3.19...</div>
<svg class="abs" style="left:793.4px;top:333.4px" width="18" height="18" viewBox="0 0 18 18"><rect x="0" y="0" width="17.5" height="17.5" rx="2.5" fill="#7fcbee"/><path d="M4.2 9.6l3 2.8 6.2-7" fill="none" stroke="#e4f4fb" stroke-width="1.1"/></svg>
<div class="cbkey" style="top:333px"></div>
<div class="abs" style="left:243px;top:362px;width:770px;height:35px;background:#fff"></div>
<div class="abs" style="left:275px;top:363px;width:1px;height:33px;background:#dcdddf"></div>
<div class="abs" style="left:445px;top:363px;width:1px;height:33px;background:#dcdddf"></div>
<div class="abs" style="left:615px;top:363px;width:1px;height:33px;background:#dcdddf"></div>
<div class="abs" style="left:785px;top:363px;width:1px;height:33px;background:#dcdddf"></div>
<div class="abs" style="left:955px;top:363px;width:1px;height:33px;background:#dcdddf"></div>
<div class="cb" style="top:367px"></div>
<svg class="abs" style="left:280px;top:366px" width="24" height="24" viewBox="0 0 24 24"><rect x="5" y="4.3" width="14.5" height="13.2" rx="1.6" fill="none" stroke="#0a5f8e" stroke-width="1.1"/><path d="M7.3 8.35H16.9" stroke="#0a5f8e" stroke-width="1.1" stroke-linecap="round"/><path d="M12.4 10.95H16.9" stroke="#3b86b0" stroke-width="1.1" stroke-linecap="round"/><path d="M12.4 13.5H16.9" stroke="#0a5f8e" stroke-width="1.1" stroke-linecap="round"/><circle cx="4.52" cy="19.60" r="2.32" fill="#1684c2"/><circle cx="4.52" cy="19.80" r="0.68" fill="#fff" opacity="0.45"/><circle cx="9.48" cy="19.60" r="2.32" fill="#1684c2"/><circle cx="9.48" cy="19.80" r="0.68" fill="#fff" opacity="0.45"/><circle cx="7" cy="14" r="4" fill="#1684c2"/></svg>
<div class="lnk" style="top:371.8px">paloaltogp</div>
<div class="cell" style="left:453px;top:368px;transform:scaleX(1.025)">C = RO, CN = 10.2.3.19...</div>
<div class="cell" style="left:623px;top:368px;transform:scaleX(1.025)">C = RO, CN = 10.2.3.19...</div>
<svg class="abs" style="left:793.4px;top:368.4px" width="18" height="18" viewBox="0 0 18 18"><rect x="0" y="0" width="17.5" height="17.5" rx="2.5" fill="#7fcbee"/><path d="M4.2 9.6l3 2.8 6.2-7" fill="none" stroke="#e4f4fb" stroke-width="1.1"/></svg>
<svg class="abs" style="left:963.4px;top:368.4px" width="18" height="18" viewBox="0 0 18 18"><rect x="0" y="0" width="17.5" height="17.5" rx="2.5" fill="#7fcbee"/><path d="M4.2 9.6l3 2.8 6.2-7" fill="none" stroke="#e4f4fb" stroke-width="1.1"/></svg>
<svg class="abs" style="left:985px;top:363px" width="24" height="24" viewBox="0 0 24 24"><path d="M10 13H5a1.2 1.2 0 0 1-1.2-1.2V5.4a1.2 1.2 0 0 1 1.2-1.2H16.5a1.2 1.2 0 0 1 1.2 1.2V9" fill="none" stroke="#b9b9b9" stroke-width="1.3"/><path d="M7.3 6.7H15.5M10.8 9H15.5" stroke="#b9b9b9" stroke-width="1.1"/><circle cx="3.75" cy="17.12" r="1.91" fill="#b9b9b9"/><circle cx="3.75" cy="17.28" r="0.56" fill="#fff" opacity="0.45"/><circle cx="7.85" cy="17.12" r="1.91" fill="#b9b9b9"/><circle cx="7.85" cy="17.28" r="0.56" fill="#fff" opacity="0.45"/><circle cx="5.8" cy="12.5" r="3.3" fill="#b9b9b9"/><circle cx="14.8" cy="17.9" r="5" fill="#fff" stroke="#b9b9b9" stroke-width="1.3"/><path d="M11.5 14.6L18.1 21.2" stroke="#b9b9b9" stroke-width="1.3"/></svg>
<div class="abs" style="left:243px;top:396px;width:770px;height:1px;background:#e3e3e3"></div>
<!-- toolbar -->
<div class="abs" style="left:243px;top:843px;width:770px;height:1px;background:#c9c9c9"></div>
<div class="abs" style="left:243px;top:844px;width:770px;height:33px;background:#f9fafa"></div>
<svg class="abs" style="left:250px;top:851px" width="21" height="21" viewBox="0 0 21 21"><circle cx="10" cy="10.5" r="8.5" fill="none" stroke="#d9676a" stroke-width="1.6"/><path d="M5 10.5h10" stroke="#d9676a" stroke-width="1.6"/></svg>
<div class="tb" style="left:273.5px;color:#4a4f57;transform:scaleX(1)">Delete</div>
<div class="tb" style="left:337.5px;color:#b9bcbf;transform:scaleX(0.945)">Revoke</div>
<div class="tb" style="left:403px;color:#4a4f57;transform:scaleX(0.945)">Renew</div>
<div class="tb" style="left:486.3px;color:#4a4f57;transform:scaleX(1.02)">Import</div>
<div class="tb" style="left:571.5px;color:#4a4f57;transform:scaleX(0.985)">Generate</div>
<div class="tb" style="left:673.3px;color:#4a4f57;transform:scaleX(1.02)">Export Certificate</div>
<div class="tb" style="left:831.7px;color:#4a4f57;transform:scaleX(1.0)">Import HA Key</div>
<div class="tb" style="left:970.3px;color:#4a4f57;transform:scaleX(1)">Export HA Key</div>
<svg class="abs" style="left:460px;top:845px" width="24" height="32" viewBox="0 0 24 32"><path d="M20.7 22.450000000000003V20.200000000000003a1.6 1.6 0 0 0-1.6-1.6H4.1a1.6 1.6 0 0 0-1.6 1.6V24.7a1.6 1.6 0 0 0 1.6 1.6H19.099999999999998a1.6 1.6 0 0 0 1.6-1.6V22.450000000000003H11.96" fill="none" stroke="#8e959b" stroke-width="1.5"/><circle cx="7.60" cy="22.450000000000003" r="1.9" fill="#8e959b"/><path d="M11.7 7V16.2M7.9 12.8L11.7 16.4L15.5 12.8" fill="none" stroke="#8e959b" stroke-width="1.4"/></svg>
<svg class="abs" style="left:545px;top:845px" width="24" height="32" viewBox="0 0 24 32"><path d="M8 20H5.8a1.3 1.3 0 0 1-1.3-1.3V9.8a1.3 1.3 0 0 1 1.3-1.3H18.2a1.3 1.3 0 0 1 1.3 1.3V14" fill="none" stroke="#3d8ec2" stroke-width="1.5"/><path d="M7 11.6H17" stroke="#3d8ec2" stroke-width="1.3"/><circle cx="4.85" cy="22.22" r="1.91" fill="#3d9ad0"/><circle cx="4.85" cy="22.38" r="0.56" fill="#fff" opacity="0.45"/><circle cx="8.95" cy="22.22" r="1.91" fill="#3d9ad0"/><circle cx="8.95" cy="22.38" r="0.56" fill="#fff" opacity="0.45"/><circle cx="6.9" cy="17.6" r="3.3" fill="#3d9ad0"/><circle cx="16.4" cy="19.6" r="4.4" fill="#e9653f" stroke="#f9fafa" stroke-width="0.8"/><rect x="15.6" y="14" width="1.6" height="2.4" fill="#e9653f" transform="rotate(0 16.4 19.6)"/><rect x="15.6" y="14" width="1.6" height="2.4" fill="#e9653f" transform="rotate(45 16.4 19.6)"/><rect x="15.6" y="14" width="1.6" height="2.4" fill="#e9653f" transform="rotate(90 16.4 19.6)"/><rect x="15.6" y="14" width="1.6" height="2.4" fill="#e9653f" transform="rotate(135 16.4 19.6)"/><rect x="15.6" y="14" width="1.6" height="2.4" fill="#e9653f" transform="rotate(180 16.4 19.6)"/><rect x="15.6" y="14" width="1.6" height="2.4" fill="#e9653f" transform="rotate(225 16.4 19.6)"/><rect x="15.6" y="14" width="1.6" height="2.4" fill="#e9653f" transform="rotate(270 16.4 19.6)"/><rect x="15.6" y="14" width="1.6" height="2.4" fill="#e9653f" transform="rotate(315 16.4 19.6)"/><circle cx="16.4" cy="19.6" r="2" fill="#f9fafa"/><circle cx="16.4" cy="19.6" r="0.9" fill="#e9653f"/></svg>
<svg class="abs" style="left:648px;top:845px" width="24" height="32" viewBox="0 0 24 32"><path d="M20.9 21.9V19.3a1.6 1.6 0 0 0-1.6-1.6H4.1a1.6 1.6 0 0 0-1.6 1.6V24.5a1.6 1.6 0 0 0 1.6 1.6H19.299999999999997a1.6 1.6 0 0 0 1.6-1.6V21.9H12.07" fill="none" stroke="#2f77a3" stroke-width="1.5"/><circle cx="7.65" cy="21.9" r="1.9" fill="#5cb85c"/><path d="M11.6 16.1V7.3M8.3 9.7L11.6 7.2L14.9 9.7" fill="none" stroke="#46a84f" stroke-width="1.6"/></svg>
<svg class="abs" style="left:806px;top:845px" width="24" height="32" viewBox="0 0 24 32"><path d="M20.7 22.450000000000003V20.200000000000003a1.6 1.6 0 0 0-1.6-1.6H4.1a1.6 1.6 0 0 0-1.6 1.6V24.7a1.6 1.6 0 0 0 1.6 1.6H19.099999999999998a1.6 1.6 0 0 0 1.6-1.6V22.450000000000003H11.96" fill="none" stroke="#8e959b" stroke-width="1.5"/><circle cx="7.60" cy="22.450000000000003" r="1.9" fill="#8e959b"/><path d="M11.7 7V16.2M7.9 12.8L11.7 16.4L15.5 12.8" fill="none" stroke="#8e959b" stroke-width="1.4"/></svg>
<svg class="abs" style="left:944px;top:845px" width="24" height="32" viewBox="0 0 24 32"><path d="M20.9 21.9V19.3a1.6 1.6 0 0 0-1.6-1.6H4.1a1.6 1.6 0 0 0-1.6 1.6V24.5a1.6 1.6 0 0 0 1.6 1.6H19.299999999999997a1.6 1.6 0 0 0 1.6-1.6V21.9H12.07" fill="none" stroke="#2f77a3" stroke-width="1.5"/><circle cx="7.65" cy="21.9" r="1.9" fill="#5cb85c"/><path d="M11.6 16.1V7.3M8.3 9.7L11.6 7.2L14.9 9.7" fill="none" stroke="#46a84f" stroke-width="1.6"/></svg>

</body></html>
